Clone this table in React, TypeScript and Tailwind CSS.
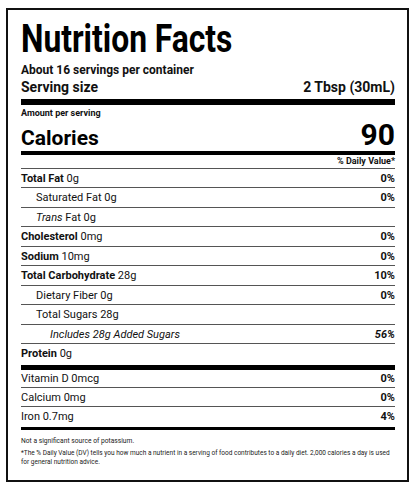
import React from "react";

type RowProps = {
  children: React.ReactNode;
  right?: React.ReactNode;
  indent?: string;
  cls: string;
};

function Row({ children, right, indent = "", cls }: RowProps) {
  return (
    <div className={`flex justify-between items-start whitespace-nowrap ${cls}`}>
      <div className={indent}>{children}</div>
      {right !== undefined && <div className="font-bold">{right}</div>}
    </div>
  );
}

export default function App() {
  const line = "border-b border-[#555]";
  const nRow = `h-[19.45px] leading-[20px] text-[11px] ${line}`;
  return (
    <div className="w-[416px] h-[491px] bg-white font-[Roboto,sans-serif] text-[#111] pt-[8px] pl-[6px]">
      <div className="w-[403px] h-[474px] border-2 border-[#111] pl-[13px] pr-[12px] pt-[9px]">
        <div className="h-[40px] leading-[40px] text-[39px] font-bold whitespace-nowrap text-black">
          <span className="inline-block origin-left scale-x-[0.815]">Nutrition Facts</span>
        </div>
        <div className="mt-[3px] h-[16px] leading-[16px] text-[12px] font-bold">
          About 16 servings per container
        </div>
        <div className="mt-[1px] h-[16px] leading-[16px] text-[14px] font-bold flex justify-between">
          <span>Serving size</span>
          <span>2 Tbsp (30mL)</span>
        </div>
        <div className="mt-[4px] h-[6px] bg-black" />
        <div className="mt-[2px] h-[12px] leading-[12px] text-[9px] font-bold">Amount per serving</div>
        <div className="h-[32px] flex items-baseline justify-between font-bold text-black">
          <span className="text-[21px] leading-[24px]">Calories</span>
          <span className="text-[30px] leading-[32px]">90</span>
        </div>
        <div className="h-[4px] bg-black" />
        <div className={`h-[14px] leading-[13px] text-[9px] font-bold text-right ${line}`}>
          % Daily Value*
        </div>

        <Row cls={nRow} right="0%">
          <b>Total Fat</b> 0g
        </Row>
        <Row cls={nRow} right="0%" indent="pl-[15px]">
          Saturated Fat 0g
        </Row>
        <Row cls={nRow} indent="pl-[15px]">
          <i>Trans</i> Fat 0g
        </Row>
        <Row cls={nRow} right="0%">
          <b>Cholesterol</b> 0mg
        </Row>
        <Row cls={nRow} right="0%">
          <b>Sodium</b> 10mg
        </Row>
        <Row cls={nRow} right="10%">
          <b>Total Carbohydrate</b> 28g
        </Row>
        <Row cls={nRow} right="0%" indent="pl-[15px]">
          Dietary Fiber 0g
        </Row>
        <Row cls={nRow} indent="pl-[15px]">
          Total Sugars 28g
        </Row>
        <Row cls={nRow} right={<i>56%</i>} indent="pl-[29px] italic">
          Includes 28g Added Sugars
        </Row>
        <Row cls="h-[21px] leading-[20px] text-[11px]">
          <b>Protein</b> 0g
        </Row>
        <div className="h-[5px] bg-black" />

        <Row cls={`h-[18.5px] leading-[18.5px] text-[11px] ${line}`} right="0%">
          Vitamin D 0mcg
        </Row>
        <Row cls={`h-[19px] leading-[20px] text-[11px] ${line}`} right="0%">
          Calcium 0mg
        </Row>
        <Row cls="h-[20px] leading-[20px] text-[11px]" right="4%">
          Iron 0.7mg
        </Row>
        <div className="h-[3px] bg-black" />

        <div className="mt-[6px] h-[10px] leading-[10px] text-[6.7px] text-[#222] whitespace-nowrap">
          Not a significant source of potassium.
        </div>
        <div className="mt-[3px] leading-[8.5px] text-[6.5px] text-[#222] whitespace-nowrap">
          *The % Daily Value (DV) tells you how much a nutrient in a serving of food contributes to a daily diet. 2,000 calories a day is used
          <br />
          for general nutrition advice.
        </div>
      </div>
    </div>
  );
}
